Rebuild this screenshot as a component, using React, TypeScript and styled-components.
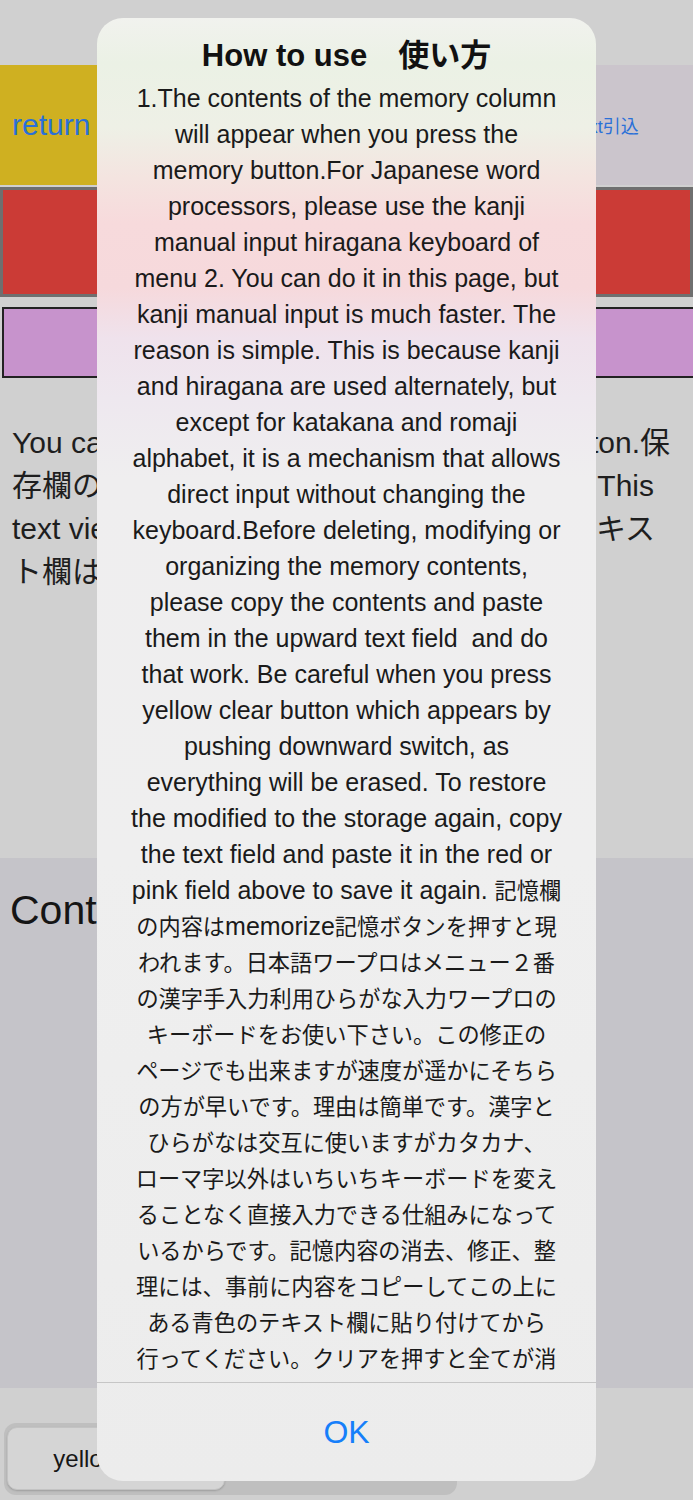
import styled, { createGlobalStyle } from "styled-components";

const GlobalStyle = createGlobalStyle`
  html, body {
    margin: 0;
    padding: 0;
  }
  body {
    background: #d0d0d0;
    font-family: "Liberation Sans", "Noto Sans CJK JP", sans-serif;
    color: #1c1c1c;
  }
`;

const Page = styled.div`
  position: relative;
  width: 693px;
  height: 1500px;
  overflow: hidden;
  display: flex;
  flex-direction: column;
  background: #d0d0d0;
`;

const TopSection = styled.section`
  height: 858px;
  padding-top: 65px;
  box-sizing: border-box;
  display: flex;
  flex-direction: column;
`;

const ButtonRow = styled.div`
  display: grid;
  grid-template-columns: 3fr 1fr;
  height: 120px;
`;

const NavButton = styled.div<{ $bg: string; $size: number; $align: string }>`
  display: flex;
  align-items: center;
  justify-content: ${(p) => p.$align};
  padding: 0 12px;
  background: ${(p) => p.$bg};
  color: #2a70d8;
  font-size: ${(p) => p.$size}px;
`;

const Field = styled.div<{ $bg: string; $border: string; $height: number; $bw: number }>`
  box-sizing: border-box;
  height: ${(p) => p.$height}px;
  background: ${(p) => p.$bg};
  border: ${(p) => p.$bw}px solid ${(p) => p.$border};
`;

const RedField = styled(Field)`
  margin-top: 2px;
`;

const PinkField = styled(Field)`
  margin: 10px 0 0 2px;
  border-right-width: 0;
`;

const Notice = styled.div`
  margin-top: 43px;
  padding-left: 12px;
  font-size: 30px;
  line-height: 43px;
  color: #1e1e1e;
`;

// each wrapped line of the notice: start of the line on the left, its end flush right
const NoticeLine = styled.div<{ $inset?: number }>`
  display: flex;
  justify-content: space-between;
  white-space: nowrap;
  padding-right: ${(p) => p.$inset ?? 0}px;
`;

const ContentSection = styled.section`
  height: 530px;
  box-sizing: border-box;
  padding: 26px 10px;
  background: #c5c4c9;
`;

const ContentHeading = styled.h2`
  margin: 0;
  font-size: 41px;
  line-height: 52px;
  font-weight: normal;
  color: #151515;
`;

const BottomBar = styled.div`
  flex: 1;
  padding: 35px 0 0 4px;
`;

const ButtonGroup = styled.div`
  width: 453px;
  height: 72px;
  box-sizing: border-box;
  padding: 4px 0 0 3px;
  display: flex;
  background: #bfbfbf;
  border-radius: 12px;
`;

const GroupButton = styled.div<{ $active?: boolean }>`
  width: ${(p) => (p.$active ? "218px" : "auto")};
  flex: ${(p) => (p.$active ? "none" : "1")};
  height: 63px;
  box-sizing: border-box;
  display: flex;
  align-items: center;
  justify-content: center;
  font-size: 24px;
  color: #161616;
  background: ${(p) => (p.$active ? "#d5d5d5" : "transparent")};
  border: ${(p) => (p.$active ? "1px solid #c3c3c3" : "none")};
  border-radius: 10px;
  box-shadow: ${(p) => (p.$active ? "0 1px 2px rgba(0,0,0,0.18)" : "none")};
`;

/* alert */

const Alert = styled.div`
  position: absolute;
  top: 18px;
  left: 97px;
  width: 499px;
  height: 1463px;
  border-radius: 26px;
  overflow: hidden;
  display: flex;
  flex-direction: column;
  background: linear-gradient(
    180deg,
    #f1f2ee 0px,
    #ebf1e5 45px,
    #eef0e6 110px,
    #f4e4e0 160px,
    #f7dadc 205px,
    #f6d9dc 270px,
    #efe2ec 320px,
    #eee8ef 380px,
    #efeeef 460px,
    #efefef 840px,
    #ececec 1463px
  );
`;

const AlertBody = styled.div`
  height: 1364px;
  overflow: hidden;
  padding-top: 18px;
  box-sizing: border-box;
  text-align: center;
  color: #1a1a1a;
`;

const AlertTitle = styled.h1`
  margin: 0 0 4px;
  font-size: 31px;
  line-height: 40px;
  font-weight: bold;
  color: #111;
`;

const MessageLine = styled.div`
  height: 36px;
  font-size: 25px;
  line-height: 36px;
  white-space: pre;
`;

const Kana = styled.span`
  font-size: 22.2px;
  line-height: 1;
`;

const Separator = styled.div`
  height: 1px;
  background: #c6c6c6;
`;

const AlertFooter = styled.div`
  flex: 1;
  display: flex;
  align-items: center;
  justify-content: center;
  color: #167ffa;
  font-size: 32px;
`;

const message = [
  "1.The contents of the memory column",
  "will appear when you press the",
  "memory button.For Japanese word",
  "processors, please use the kanji",
  "manual input hiragana keyboard of",
  "menu 2. You can do it in this page, but",
  "kanji manual input is much faster. The",
  "reason is simple. This is because kanji",
  "and hiragana are used alternately, but",
  "except for katakana and romaji",
  "alphabet, it is a mechanism that allows",
  "direct input without changing the",
  "keyboard.Before deleting, modifying or",
  "organizing the memory contents,",
  "please copy the contents and paste",
  "them in the upward text field  and do",
  "that work. Be careful when you press",
  "yellow clear button which appears by",
  "pushing downward switch, as",
  "everything will be erased. To restore",
  "the modified to the storage again, copy",
  "the text field and paste it in the red or",
  "pink field above to save it again. 記憶欄",
  "の内容はmemorize記憶ボタンを押すと現",
  "われます。日本語ワープロはメニュー２番",
  "の漢字手入力利用ひらがな入力ワープロの",
  "キーボードをお使い下さい。この修正の",
  "ページでも出来ますが速度が遥かにそちら",
  "の方が早いです。理由は簡単です。漢字と",
  "ひらがなは交互に使いますがカタカナ、",
  "ローマ字以外はいちいちキーボードを変え",
  "ることなく直接入力できる仕組みになって",
  "いるからです。記憶内容の消去、修正、整",
  "理には、事前に内容をコピーしてこの上に",
  "ある青色のテキスト欄に貼り付けてから",
  "行ってください。クリアを押すと全てが消",
  "えてしまうので十分注意して下さい。修正",
];

const notice = [
  { head: "You can see the memory contents with", tail: "button.保", inset: 23 },
  { head: "存欄の内容はボタンを押すと表示します。", tail: "This", inset: 39 },
  { head: "text view is read only, and can be", tail: "テキス", inset: 38 },
  { head: "ト欄は閲覧とコピー用です。", tail: "", inset: 0 },
];

// japanese runs are set a little smaller than the latin text
const cjk = /([\u3000-\u30ff\u3400-\u9fff\uff00-\uffef]+)/;

function withKana(text: string) {
  return text.split(cjk).map((part, i) =>
    i % 2 === 1 ? <Kana key={i}>{part}</Kana> : part
  );
}

function App() {
  return (
    <>
      <GlobalStyle />
      <Page>
        <TopSection>
          <ButtonRow>
            <NavButton $bg="#cfb021" $size={30} $align="flex-start">
              return
            </NavButton>
            <NavButton $bg="#cbc5cc" $size={18} $align="center">
              text引込
            </NavButton>
          </ButtonRow>
          <RedField $bg="#cb3b36" $border="#6f6f6f" $height={110} $bw={3} />
          <PinkField $bg="#c793cc" $border="#222" $height={71} $bw={2} />
          <Notice>
            {notice.map((l, i) => (
              <NoticeLine key={i} $inset={l.inset}>
                <span>{l.head}</span>
                <span>{l.tail}</span>
              </NoticeLine>
            ))}
          </Notice>
        </TopSection>
        <ContentSection>
          <ContentHeading>Contents 内容</ContentHeading>
        </ContentSection>
        <BottomBar>
          <ButtonGroup>
            <GroupButton $active>yellow clear</GroupButton>
            <GroupButton>switch</GroupButton>
          </ButtonGroup>
        </BottomBar>

        <Alert>
          <AlertBody>
            <AlertTitle>How to use　使い方</AlertTitle>
            {message.map((line, i) => (
              <MessageLine key={i}>{withKana(line)}</MessageLine>
            ))}
          </AlertBody>
          <Separator />
          <AlertFooter>OK</AlertFooter>
        </Alert>
      </Page>
    </>
  );
}

export default App;
